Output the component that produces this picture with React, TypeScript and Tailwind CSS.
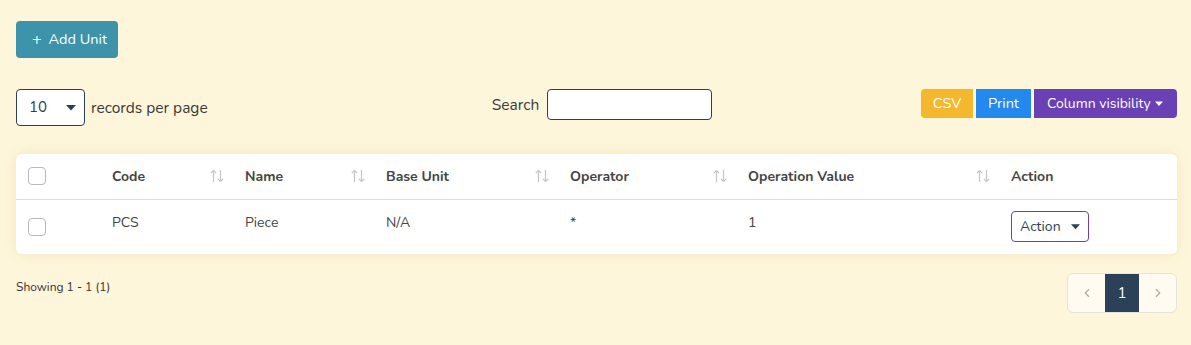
import { ChevronLeft, ChevronRight } from 'lucide-react';

const FONT = { fontFamily: 'Nunito, Lato, "Noto Sans", sans-serif' };

const columns = [
  { key: 'code', label: 'Code', width: 'w-[133px]', sortable: true },
  { key: 'name', label: 'Name', width: 'w-[141px]', sortable: true },
  { key: 'base', label: 'Base Unit', width: 'w-[184px]', sortable: true },
  { key: 'operator', label: 'Operator', width: 'w-[178px]', sortable: true },
  { key: 'value', label: 'Operation Value', width: 'w-[263px]', sortable: true },
];

const rows = [{ code: 'PCS', name: 'Piece', base: 'N/A', operator: '*', value: '1' }];

const Caret = ({ className = '' }: { className?: string }) => (
  <svg width="10" height="6" viewBox="0 0 10 6" className={className}>
    <path d="M0 0h10L5 5.5z" fill="currentColor" />
  </svg>
);

const SortIcon = () => (
  <svg width="16" height="14" viewBox="0 0 16 14" className="text-[#c4c4c4]">
    <path d="M4.5 13V1.5M1.8 4.2 4.5 1.5l2.7 2.7" stroke="currentColor" strokeWidth="1.2" fill="none" />
    <path d="M11.5 1v11.5M8.8 9.8l2.7 2.7 2.7-2.7" stroke="currentColor" strokeWidth="1.2" fill="none" />
  </svg>
);

const Checkbox = () => (
  <span className="block w-[18px] h-[18px] rounded-[4px] border border-[#b9b9b9] bg-white" />
);

export default function App() {
  return (
    <div className="min-h-[345px] bg-[#fef6da] pl-4 pr-[14px] pt-[21px] text-[#3a3a3a]" style={FONT}>
      <button className="h-[37px] w-[102px] pl-4 rounded bg-[#3d93a9] text-white text-[14.5px] flex items-center gap-[7px]">
        <span className="text-[16px] leading-none">+</span>
        Add Unit
      </button>

      <div className="mt-[31px] flex items-start justify-between">
        <div className="flex items-center gap-[6px] w-[400px]">
          <div className="w-[69px] h-[37px] border border-[#2b3f55] rounded bg-white flex items-center justify-between pl-3 pr-[8px] text-[15px] text-[#2b3f55]">
            10
            <Caret className="text-[#2b3f55]" />
          </div>
          <span className="text-[15.5px]">records per page</span>
        </div>

        <div className="flex items-center gap-2 mr-[133px]">
          <span className="text-[15.5px]">Search</span>
          <input className="w-[165px] h-[31px] border border-[#2b3f55] rounded bg-white outline-none" />
        </div>

        <div className="flex items-center gap-[3px] text-white text-[14.5px]">
          <button className="h-[29px] w-[52px] rounded-l bg-[#f4b82e]">CSV</button>
          <button className="h-[29px] w-[55px] bg-[#2489ec]">Print</button>
          <button className="h-[29px] w-[143px] pl-[13px] pr-[14px] rounded-r bg-[#6a40b5] flex items-center justify-between">
            <span className="text-[14px]">Column visibility</span>
            <Caret className="w-[8px]" />
          </button>
        </div>
      </div>

      <div className="mt-[28px] bg-white rounded-md shadow-[0_0_12px_rgba(180,160,90,0.18)]">
        <table className="w-full border-collapse table-fixed text-[14px]">
          <thead>
            <tr className="border-b border-[#dcdcdc] h-[45px]">
              <th className="w-[84px] pl-3 text-left">
                <Checkbox />
              </th>
              {columns.map((col) => (
                <th key={col.key} className={`${col.width} pl-3 pr-[8px] text-left font-bold text-[#444]`}>
                  <div className="flex items-center justify-between">
                    {col.label}
                    <SortIcon />
                  </div>
                </th>
              ))}
              <th className="pl-3 text-left font-bold text-[#444]">Action</th>
            </tr>
          </thead>
          <tbody>
            {rows.map((row) => (
              <tr key={row.code} className="h-[55px]">
                <td className="pl-3">
                  <Checkbox />
                </td>
                {columns.map((col) => (
                  <td key={col.key} className="pl-3 text-[#444] align-middle pb-[8px]">
                    {row[col.key as keyof typeof row]}
                  </td>
                ))}
                <td className="pl-3">
                  <button className="h-[31px] w-[78px] border border-[#6a40b5] rounded pl-2 pr-[8px] flex items-center justify-between text-[14px] text-[#2b3f55]">
                    Action
                    <Caret className="w-[9px]" />
                  </button>
                </td>
              </tr>
            ))}
          </tbody>
        </table>
      </div>

      <div className="mt-[19px] flex items-start justify-between">
        <span className="text-[12px] mt-[5px] text-[#333]">Showing 1 - 1 (1)</span>
        <div className="flex h-[40px] border border-[#e6e3da] rounded-md overflow-hidden bg-[#fffbf0]">
          <span className="w-[37px] flex items-center justify-center text-[#aaa]">
            <ChevronLeft size={14} />
          </span>
          <span className="w-[34px] flex items-center justify-center bg-[#2a4158] text-white text-[15px]">1</span>
          <span className="w-[37px] flex items-center justify-center text-[#aaa]">
            <ChevronRight size={14} />
          </span>
        </div>
      </div>
    </div>
  );
}
